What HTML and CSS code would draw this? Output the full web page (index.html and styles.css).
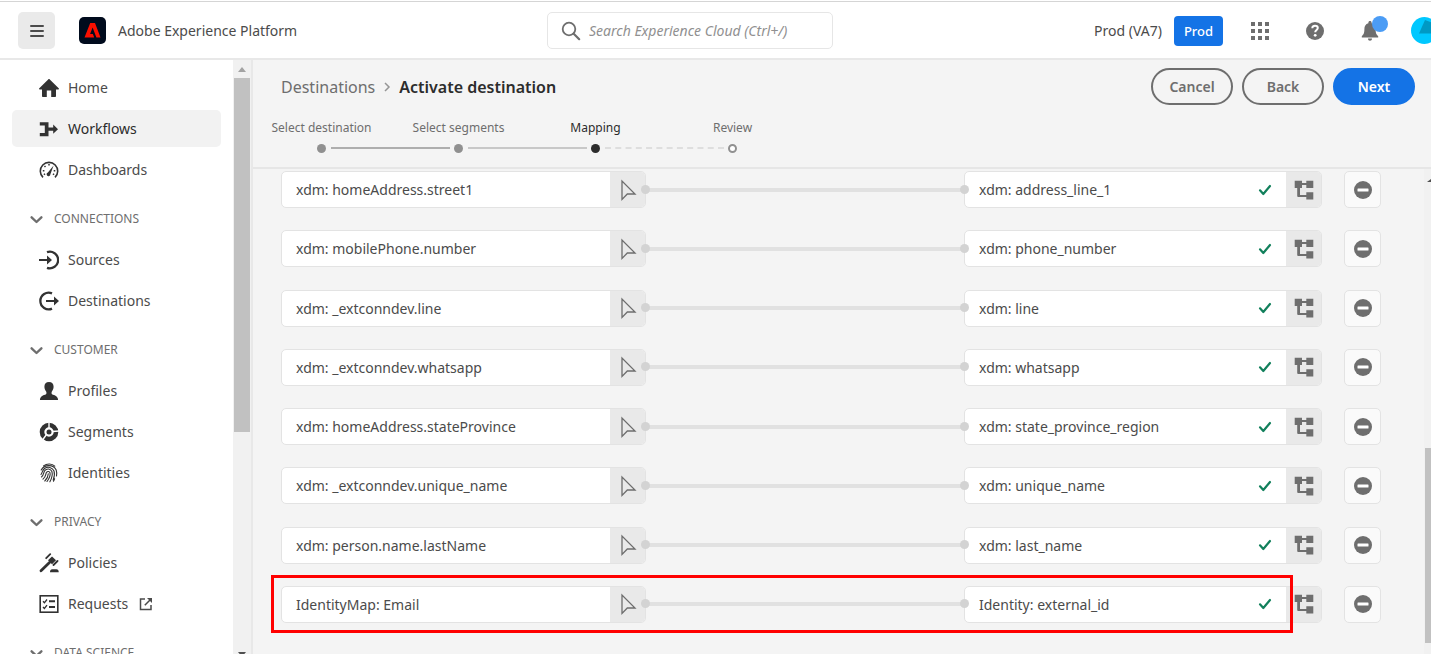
FILE: index.html
```html
<!DOCTYPE html>
<html lang="en">
<head>
<meta charset="utf-8">
<meta name="viewport" content="width=device-width, initial-scale=1">
<title>Activate destination</title>
<link rel="stylesheet" href="styles.css">
</head>
<body>
<svg class="defs" aria-hidden="true">
  <symbol id="i-chevron" viewBox="0 0 12 12"><path d="M1.500 4 6 8.300 10.500 4" fill="none" stroke="currentColor" stroke-width="2.200" stroke-linecap="round" stroke-linejoin="round"/></symbol>
  <symbol id="i-cursor" viewBox="0 0 20 24"><path d="M4 3v18.500l5.300-5.500h7.700z" fill="none" stroke="currentColor" stroke-width="1.300" stroke-linejoin="miter"/></symbol>
  <symbol id="i-check" viewBox="0 0 14 12"><path d="M2 6.300 5.300 10 12 2" fill="none" stroke="currentColor" stroke-width="2.200" stroke-linecap="round" stroke-linejoin="round"/></symbol>
  <symbol id="i-tree" viewBox="0 0 20 20"><path d="M.7.800h7.300v2.200h4.300V.800h7V8h-7V5H8v3H6v7h6.300v-2.800h7v7.200h-7V17H4.500c-.8 0-1.300-.5-1.300-1.300V8H.7z" fill="currentColor"/></symbol>
  <symbol id="i-minus" viewBox="0 0 18 18"><circle cx="9" cy="9" r="9" fill="currentColor"/><rect x="3.500" y="7.500" width="11" height="3" rx=".5" fill="#fff"/></symbol>
</svg>

<header class="topbar">
  <div class="brand">
    <button class="menu-btn" aria-label="Menu"><svg width="14" height="14" viewBox="0 0 14 14"><path d="M1 2h12M1 7h12M1 12h12" stroke="#4b4b4b" stroke-width="2" stroke-linecap="round"/></svg></button>
    <svg class="logo" viewBox="0 0 27 27" aria-label="Adobe"><rect width="27" height="27" rx="5" fill="#000b1d"/><path d="M11.200 6h4.800l5.500 14.500h-4.100L13.600 10.600l-2.500 6.300h2.800l1.300 3.600H5.500z" fill="#fa0f00"/></svg>
    <span class="brand-name">Adobe Experience Platform</span>
  </div>
  <label class="search">
    <svg width="20" height="20" viewBox="0 0 20 20"><circle cx="8" cy="8" r="6.300" fill="none" stroke="#6e6e6e" stroke-width="1.800"/><path d="m12.700 12.700 5.500 5.500" stroke="#6e6e6e" stroke-width="2.200" stroke-linecap="round"/></svg>
    <input type="search" aria-label="Search" placeholder="Search Experience Cloud (Ctrl+/)">
  </label>
  <div class="tools">
    <span class="sandbox">Prod (VA7)</span>
    <button class="env">Prod</button>
    <button class="tool" aria-label="Apps"><svg width="18" height="18" viewBox="0 0 18 18" fill="#6e6e6e"><path d="M0 0h4v4H0zM7 0h4v4H7zM14 0h4v4h-4zM0 7h4v4H0zM7 7h4v4H7zM14 7h4v4h-4zM0 14h4v4H0zM7 14h4v4H7zM14 14h4v4h-4z"/></svg></button>
    <button class="tool" aria-label="Help"><svg width="18" height="18" viewBox="0 0 18 18"><circle cx="9" cy="9" r="9" fill="#6e6e6e"/><path d="M6.300 6.200C6.300 4.500 7.500 3.800 9 3.800s2.800.8 2.800 2.300c0 1.900-2.600 2-2.600 4.200" fill="none" stroke="#fff" stroke-width="2"/><circle cx="9.200" cy="13.300" r="1.400" fill="#fff"/></svg></button>
    <button class="tool bell" aria-label="Notifications"><svg width="18" height="20" viewBox="0 0 18 20" fill="#6e6e6e"><path d="M9 0c1 0 1.600.6 1.600 1.500v.8c2.900.8 4 3 4 5.700 0 4 .7 5.300 2.600 7.200v1.300H.8v-1.300C2.700 13.300 3.400 12 3.400 8c0-2.700 1.100-4.900 4-5.700v-.8C7.400.6 8 0 9 0zM7 17.600h4c0 1.400-.8 2.200-2 2.200s-2-.8-2-2.200z"/></svg></button>
    <svg class="avatar" viewBox="0 0 27 27" aria-label="Account"><circle cx="13.500" cy="13.500" r="13.500" fill="#00c8ff"/><path d="M14 3 8 16.500h19V8z" fill="#0099c4"/></svg>
  </div>
</header>

<div class="shell">
  <aside class="sidebar">
    <nav class="nav" aria-label="Main">
      <a class="item" href="#"><svg viewBox="0 0 20 20"><path d="M9.200 1.400c.5-.5 1.100-.5 1.600 0l8.900 8.800c.5.5.3 1.300-.4 1.300H17v6.700c0 .5-.3.800-.8.800h-4v-6.500H7.800V19h-4c-.5 0-.8-.3-.8-.8v-6.700H.7c-.7 0-.9-.8-.4-1.300z" fill="#323232"/></svg>Home</a>
      <a class="item active" href="#"><svg viewBox="0 0 20 20"><path d="M.8 3.200h8.700v5.300h4.700V5.600l4.800 4.600-4.800 4.600v-3H9.500v5.500H.8v-3.300h5V6.500h-5z" fill="#323232"/></svg>Workflows</a>
      <a class="item" href="#"><svg viewBox="0 0 20 20" fill="none" stroke="#323232"><path d="M4 17.400A8.700 8.700 0 1 1 16 17.400" stroke-width="1.600"/><path d="M10 4v1.600M5.500 6l1 1M3.800 10.700h1.600M16.300 10.700h-1.600M4.800 14.600l1.300-.7M15.200 14.600l-1.300-.7" stroke-width="1.500"/><path d="m14.600 5.500-3.200 8.800a1.900 1.900 0 1 1-2.500-1.700z" fill="#323232" stroke="none"/></svg>Dashboards</a>
      <button class="section"><svg><use href="#i-chevron"/></svg>CONNECTIONS</button>
      <a class="item" href="#"><svg viewBox="0 0 20 20"><path d="M8 2.200a8.300 8.300 0 1 1 0 15.600" fill="none" stroke="#323232" stroke-width="2.300"/><path d="M0 9h8V5.500l5 4.500-5 4.500V11H0z" fill="#323232"/></svg>Sources</a>
      <a class="item" href="#"><svg viewBox="0 0 20 20"><path d="M13 2.400A8.300 8.300 0 1 0 13 17.600" fill="none" stroke="#323232" stroke-width="2.300"/><path d="M7 9h8V5.500l5 4.500-5 4.500V11H7z" fill="#323232"/></svg>Destinations</a>
      <button class="section"><svg><use href="#i-chevron"/></svg>CUSTOMER</button>
      <a class="item" href="#"><svg viewBox="0 0 20 20"><path d="M10 1c3 0 4.600 2 4.600 4.800 0 2-.9 3.900-2 5.100v1.600c0 .5.300.8.700.9 3.700.9 5.800 2.500 5.800 5.600H.9c0-3.100 2.100-4.700 5.800-5.600.4-.1.700-.4.700-.9v-1.600c-1.100-1.200-2-3.100-2-5.100C5.400 3 7 1 10 1z" fill="#323232"/></svg>Profiles</a>
      <a class="item" href="#"><svg viewBox="0 0 20 20"><circle cx="10" cy="10" r="7" fill="none" stroke="#323232" stroke-width="4.600"/><circle cx="10" cy="10" r="2.500" fill="#323232"/><path d="M10 6V0M13.500 9.500 20 9M7.200 13 3.500 18" stroke="#fff" stroke-width="1.400"/></svg>Segments</a>
      <a class="item" href="#"><svg viewBox="0 0 20 20" fill="none" stroke="#323232" stroke-width="1.100" stroke-linecap="round"><path d="M4.500 2.900C8 .2 13 .4 15.800 3.200M2.200 7C5.500 1.200 14.500 1.200 17.200 7c.7 2 .6 4 .3 6M2 11.500c1.500-1.700 1-4 3.500-6 3.200-2.400 8-1.300 9.500 2.500 1 3.200.2 6.500-.8 9M2.500 14c2.500-2 1.800-4.300 3.200-6.300 2-2.700 6-2.200 7.200.8 1 3.500-.5 7.500-2 10.300M4 16.200c3-2.500 2.500-5 3.400-6.700 1-1.500 3-1.300 3.600.3.700 2.800-1.200 6.200-3 8.700M5.800 18c2-2 3.400-4.600 3.500-7.300M14.500 18.200c.5-.8.800-1.500 1.100-2.400"/></svg>Identities</a>
      <button class="section"><svg><use href="#i-chevron"/></svg>PRIVACY</button>
      <a class="item" href="#"><svg viewBox="0 0 20 20" fill="none" stroke="#323232" stroke-linecap="round"><path d="m2 17.800 8.500-8.300" stroke-width="2.800"/><path d="m7.200 5.200 4-4M14.500 12l4-4" stroke-width="1.800"/><path d="m9 7.300 4-3.800 4 3.800-4 4z" fill="#323232" stroke="none"/><path d="M11 19.200c0-2 .8-3 2.200-3h4.200c1.500 0 2.300 1 2.300 3z" fill="#323232" stroke="none"/></svg>Policies</a>
      <a class="item" href="#"><svg viewBox="0 0 20 20" fill="none" stroke="#323232"><rect x="1.200" y="1.800" width="17.600" height="16.400" stroke-width="1.600"/><path d="m4 7.300 1.400 1.500L8 5.500M4 13l1.400 1.500L8 11.200" stroke-width="1.300"/><path d="M10 7.300h6M10 13h6" stroke-width="2"/></svg>Requests<svg class="ext" viewBox="0 0 14 14" fill="none" stroke="#4b4b4b" stroke-width="1.500"><path d="M6 2H1.500v10.500H12V8"/><path d="M8 1h5v5z" fill="#4b4b4b" stroke="none"/><path d="M5.800 8.200 11 3"/></svg></a>
      <button class="section"><svg><use href="#i-chevron"/></svg>DATA SCIENCE</button>
    </nav>
    <div class="side-scroll" aria-hidden="true">
      <svg width="8" height="5" viewBox="0 0 8 5"><path d="M0 5 4 0l4 5z" fill="#a3a3a3"/></svg>
      <div class="side-thumb"></div>
      <svg class="down" width="8" height="5" viewBox="0 0 8 5"><path d="M0 0h8L4 5z" fill="#505050"/></svg>
    </div>
  </aside>

  <main class="main">
    <div class="page-head">
      <div class="title-row">
        <nav class="crumbs" aria-label="Breadcrumb">
          <a href="#">Destinations</a>
          <svg width="8" height="12" viewBox="0 0 8 12"><path d="m2 2 4 4-4 4" fill="none" stroke="#959595" stroke-width="1.500"/></svg>
          <h1>Activate destination</h1>
        </nav>
        <div class="actions">
          <button class="pill">Cancel</button>
          <button class="pill">Back</button>
          <button class="pill primary">Next</button>
        </div>
      </div>
      <ol class="steps">
        <li class="done first">Select destination</li>
        <li class="done">Select segments</li>
        <li class="current">Mapping</li>
        <li class="todo">Review</li>
      </ol>
    </div>

    <div class="body">
      <div class="rows">
        <div class="row">
          <div class="field"><input aria-label="Source field" value="xdm: homeAddress.street1"><button aria-label="Select source"><svg class="cursor"><use href="#i-cursor"/></svg></button></div>
          <div class="link"></div>
          <div class="field"><input aria-label="Target field" value="xdm: address_line_1"><svg class="check"><use href="#i-check"/></svg><button aria-label="Select target"><svg class="tree"><use href="#i-tree"/></svg></button></div>
          <button class="remove" aria-label="Remove"><svg><use href="#i-minus"/></svg></button>
        </div>
        <div class="row">
          <div class="field"><input aria-label="Source field" value="xdm: mobilePhone.number"><button aria-label="Select source"><svg class="cursor"><use href="#i-cursor"/></svg></button></div>
          <div class="link"></div>
          <div class="field"><input aria-label="Target field" value="xdm: phone_number"><svg class="check"><use href="#i-check"/></svg><button aria-label="Select target"><svg class="tree"><use href="#i-tree"/></svg></button></div>
          <button class="remove" aria-label="Remove"><svg><use href="#i-minus"/></svg></button>
        </div>
        <div class="row">
          <div class="field"><input aria-label="Source field" value="xdm: _extconndev.line"><button aria-label="Select source"><svg class="cursor"><use href="#i-cursor"/></svg></button></div>
          <div class="link"></div>
          <div class="field"><input aria-label="Target field" value="xdm: line"><svg class="check"><use href="#i-check"/></svg><button aria-label="Select target"><svg class="tree"><use href="#i-tree"/></svg></button></div>
          <button class="remove" aria-label="Remove"><svg><use href="#i-minus"/></svg></button>
        </div>
        <div class="row">
          <div class="field"><input aria-label="Source field" value="xdm: _extconndev.whatsapp"><button aria-label="Select source"><svg class="cursor"><use href="#i-cursor"/></svg></button></div>
          <div class="link"></div>
          <div class="field"><input aria-label="Target field" value="xdm: whatsapp"><svg class="check"><use href="#i-check"/></svg><button aria-label="Select target"><svg class="tree"><use href="#i-tree"/></svg></button></div>
          <button class="remove" aria-label="Remove"><svg><use href="#i-minus"/></svg></button>
        </div>
        <div class="row">
          <div class="field"><input aria-label="Source field" value="xdm: homeAddress.stateProvince"><button aria-label="Select source"><svg class="cursor"><use href="#i-cursor"/></svg></button></div>
          <div class="link"></div>
          <div class="field"><input aria-label="Target field" value="xdm: state_province_region"><svg class="check"><use href="#i-check"/></svg><button aria-label="Select target"><svg class="tree"><use href="#i-tree"/></svg></button></div>
          <button class="remove" aria-label="Remove"><svg><use href="#i-minus"/></svg></button>
        </div>
        <div class="row">
          <div class="field"><input aria-label="Source field" value="xdm: _extconndev.unique_name"><button aria-label="Select source"><svg class="cursor"><use href="#i-cursor"/></svg></button></div>
          <div class="link"></div>
          <div class="field"><input aria-label="Target field" value="xdm: unique_name"><svg class="check"><use href="#i-check"/></svg><button aria-label="Select target"><svg class="tree"><use href="#i-tree"/></svg></button></div>
          <button class="remove" aria-label="Remove"><svg><use href="#i-minus"/></svg></button>
        </div>
        <div class="row">
          <div class="field"><input aria-label="Source field" value="xdm: person.name.lastName"><button aria-label="Select source"><svg class="cursor"><use href="#i-cursor"/></svg></button></div>
          <div class="link"></div>
          <div class="field"><input aria-label="Target field" value="xdm: last_name"><svg class="check"><use href="#i-check"/></svg><button aria-label="Select target"><svg class="tree"><use href="#i-tree"/></svg></button></div>
          <button class="remove" aria-label="Remove"><svg><use href="#i-minus"/></svg></button>
        </div>
        <div class="row marked">
          <div class="field"><input aria-label="Source field" value="IdentityMap: Email"><button aria-label="Select source"><svg class="cursor"><use href="#i-cursor"/></svg></button></div>
          <div class="link"></div>
          <div class="field"><input aria-label="Target field" value="Identity: external_id"><svg class="check"><use href="#i-check"/></svg><button aria-label="Select target"><svg class="tree"><use href="#i-tree"/></svg></button></div>
          <button class="remove" aria-label="Remove"><svg><use href="#i-minus"/></svg></button>
        </div>
      </div>
      <div class="body-scroll" aria-hidden="true">
        <svg width="4" height="3" viewBox="0 0 4 3"><path d="M0 3 4 0v3z" fill="#505050"/></svg>
        <div class="body-thumb"></div>
      </div>
    </div>
  </main>
</div>
</body>
</html>
```

FILE: styles.css
```css
*, *::before, *::after { box-sizing: border-box; }

body {
  margin: 0;
  height: 100vh;
  display: flex;
  flex-direction: column;
  overflow: hidden;
  font-family: "Noto Sans", "Open Sans", sans-serif;
  font-size: 14px;
  line-height: 20px;
  color: #4b4b4b;
  background: #fff;
}

button, input { font: inherit; color: inherit; margin: 0; padding: 0; border: 0; background: none; }
svg { display: block; flex: none; }
a { color: inherit; text-decoration: none; }
.defs { position: absolute; width: 0; height: 0; }

/* Top bar */
.topbar {
  flex: none;
  display: grid;
  grid-template-columns: 547fr 286px 598fr;
  align-items: center;
  margin-top: 1px;
  padding: 10px 0 9px;
  border-top: 1px solid #d5d5d5;
  border-bottom: 2px solid #e8e8e8;
}
.brand { display: flex; align-items: center; padding-left: 18px; }
.menu-btn {
  display: grid;
  place-items: center;
  width: 37px;
  height: 37px;
  border-radius: 5px;
  background: #eaeaea;
}
.logo { width: 27px; height: 27px; margin: 0 12px 0 24px; }
.search {
  display: flex;
  align-items: center;
  gap: 8px;
  height: 37px;
  padding: 0 13px;
  border: 1px solid #e6e6e6;
  border-radius: 5px;
}
.search input { flex: 1; min-width: 0; outline: 0; }
.search input::placeholder { color: #909090; font-style: italic; opacity: 1; }
.tools {
  display: flex;
  align-items: center;
  justify-content: flex-end;
  gap: 18px;
  margin-right: -7px;
}
.sandbox { margin-right: -6px; }
.env {
  width: 49px;
  height: 30px;
  border-radius: 4px;
  background: #1473e6;
  color: #fff;
  font-size: 13px;
  font-weight: 500;
}
.tool { position: relative; display: grid; place-items: center; width: 37px; height: 37px; }
.bell::after {
  content: "";
  position: absolute;
  top: 4px;
  right: 0;
  width: 16px;
  height: 16px;
  border-radius: 50%;
  background: #4b9cf5;
}
.avatar { width: 27px; height: 27px; margin-left: 5px; }

/* Sidebar */
.shell { flex: 1; min-height: 0; display: flex; }
.sidebar { flex: none; display: flex; width: 253px; border-right: 2px solid #e8e8e8; }
.nav {
  flex: 1;
  display: flex;
  flex-direction: column;
  gap: 4px;
  padding: 9px 12px 0;
  overflow: hidden;
}
.item {
  flex: none;
  display: flex;
  align-items: center;
  gap: 9px;
  height: 37px;
  padding-left: 27px;
  border-radius: 5px;
}
.item svg { width: 20px; height: 20px; }
.item .ext { width: 14px; height: 14px; margin-left: 2px; }
.active { background: #f2f2f2; color: #2c2c2c; }
.section {
  flex: none;
  display: flex;
  align-items: center;
  gap: 11px;
  height: 45px;
  padding: 9px 0 0 18px;
  font-size: 12px;
  color: #6e6e6e;
}
.section svg { width: 13px; height: 13px; }
.side-scroll {
  flex: none;
  display: flex;
  flex-direction: column;
  align-items: center;
  width: 18px;
  padding-top: 7px;
  background: #f1f1f1;
}
.side-thumb { width: 16px; flex: 0 0 354px; margin-top: 6px; background: #c1c1c1; }
.down { margin-top: auto; margin-bottom: -3px; }

/* Page header */
.main { flex: 1; min-width: 0; display: flex; flex-direction: column; background: #f4f4f4; }
.page-head { flex: none; padding-top: 8px; border-bottom: 2px solid #e6e6e6; }
.title-row { display: flex; align-items: center; justify-content: space-between; padding: 0 16px 0 28px; }
.crumbs { display: flex; align-items: center; gap: 8px; font-size: 16px; color: #6e6e6e; }
.crumbs h1 { margin: 0; font-size: 16px; font-weight: 600; color: #2c2c2c; }
.actions { display: flex; gap: 9px; }
.pill {
  width: 82px;
  height: 37px;
  border: 2px solid #6e6e6e;
  border-radius: 19px;
  color: #6e6e6e;
  font-weight: 600;
}
.primary { border-color: #1473e6; background: #1473e6; color: #fff; }
.steps {
  display: grid;
  grid-template-columns: repeat(4, 137px);
  margin: 0;
  padding: 13px 0 14px;
  list-style: none;
  font-size: 12px;
  color: #6e6e6e;
}
.steps li { position: relative; display: flex; flex-direction: column; align-items: center; gap: 6px; }
.steps li::after { content: ""; width: 9px; height: 9px; border-radius: 50%; background: #909090; }
.steps li:not(:last-child)::before {
  content: "";
  position: absolute;
  left: calc(50% + 9px);
  right: calc(9px - 50%);
  bottom: 4px;
  border-top: 2px solid #c8c8c8;
}
.steps .first::before { border-color: #aeaeae !important; }
.steps .current { color: #2c2c2c; }
.steps .current::before { border-top: 2px dashed #dedede !important; }
.steps .current::after { background: #2c2c2c; }
.steps .todo::after { border: 2px solid #909090; background: #fff; }

/* Mapping rows */
.body { flex: 1; min-height: 0; display: flex; }
.rows {
  flex: 1;
  min-width: 0;
  display: flex;
  flex-direction: column;
  justify-content: space-between;
  padding: 2px 43px 31px 28px;
}
.row { position: relative; display: grid; grid-template-columns: 365fr 318fr 358fr 59px; }
.field {
  display: flex;
  align-items: center;
  height: 37px;
  border: 1px solid #e3e3e3;
  border-radius: 5px;
  background: #fff;
  overflow: hidden;
}
.field input { flex: 1; min-width: 0; height: 35px; padding-left: 14px; outline: 0; }
.field button { display: grid; place-items: center; width: 35px; height: 35px; background: #e9e9e9; }
.cursor { width: 20px; height: 24px; color: #6e6e6e; }
.check { width: 14px; height: 12px; margin-right: 14px; color: #12805c; }
.tree { width: 20px; height: 20px; color: #6e6e6e; }
.link { position: relative; align-self: center; height: 4px; background: #e1e1e1; }
.link::before, .link::after {
  content: "";
  position: absolute;
  z-index: 1;
  top: -3px;
  width: 9px;
  height: 9px;
  border-radius: 50%;
  background: #d3d3d3;
}
.link::before { left: -5px; }
.link::after { right: -5px; }
.remove {
  justify-self: end;
  display: grid;
  place-items: center;
  width: 37px;
  height: 37px;
  border: 1px solid #e3e3e3;
  border-radius: 5px;
  background: #fafafa;
  color: #6e6e6e;
}
.remove svg { width: 18px; height: 18px; }
.marked::after {
  content: "";
  position: absolute;
  z-index: 2;
  inset: -11px 88px -10px -10px;
  border: 3px solid #f00;
  pointer-events: none;
}
.body-scroll {
  flex: none;
  display: flex;
  flex-direction: column;
  justify-content: space-between;
  align-items: flex-end;
  width: 7px;
  padding: 10px 0 11px;
  background: #f1f1f1;
}
.body-thumb { width: 6px; height: 195px; background: #c1c1c1; }
```
